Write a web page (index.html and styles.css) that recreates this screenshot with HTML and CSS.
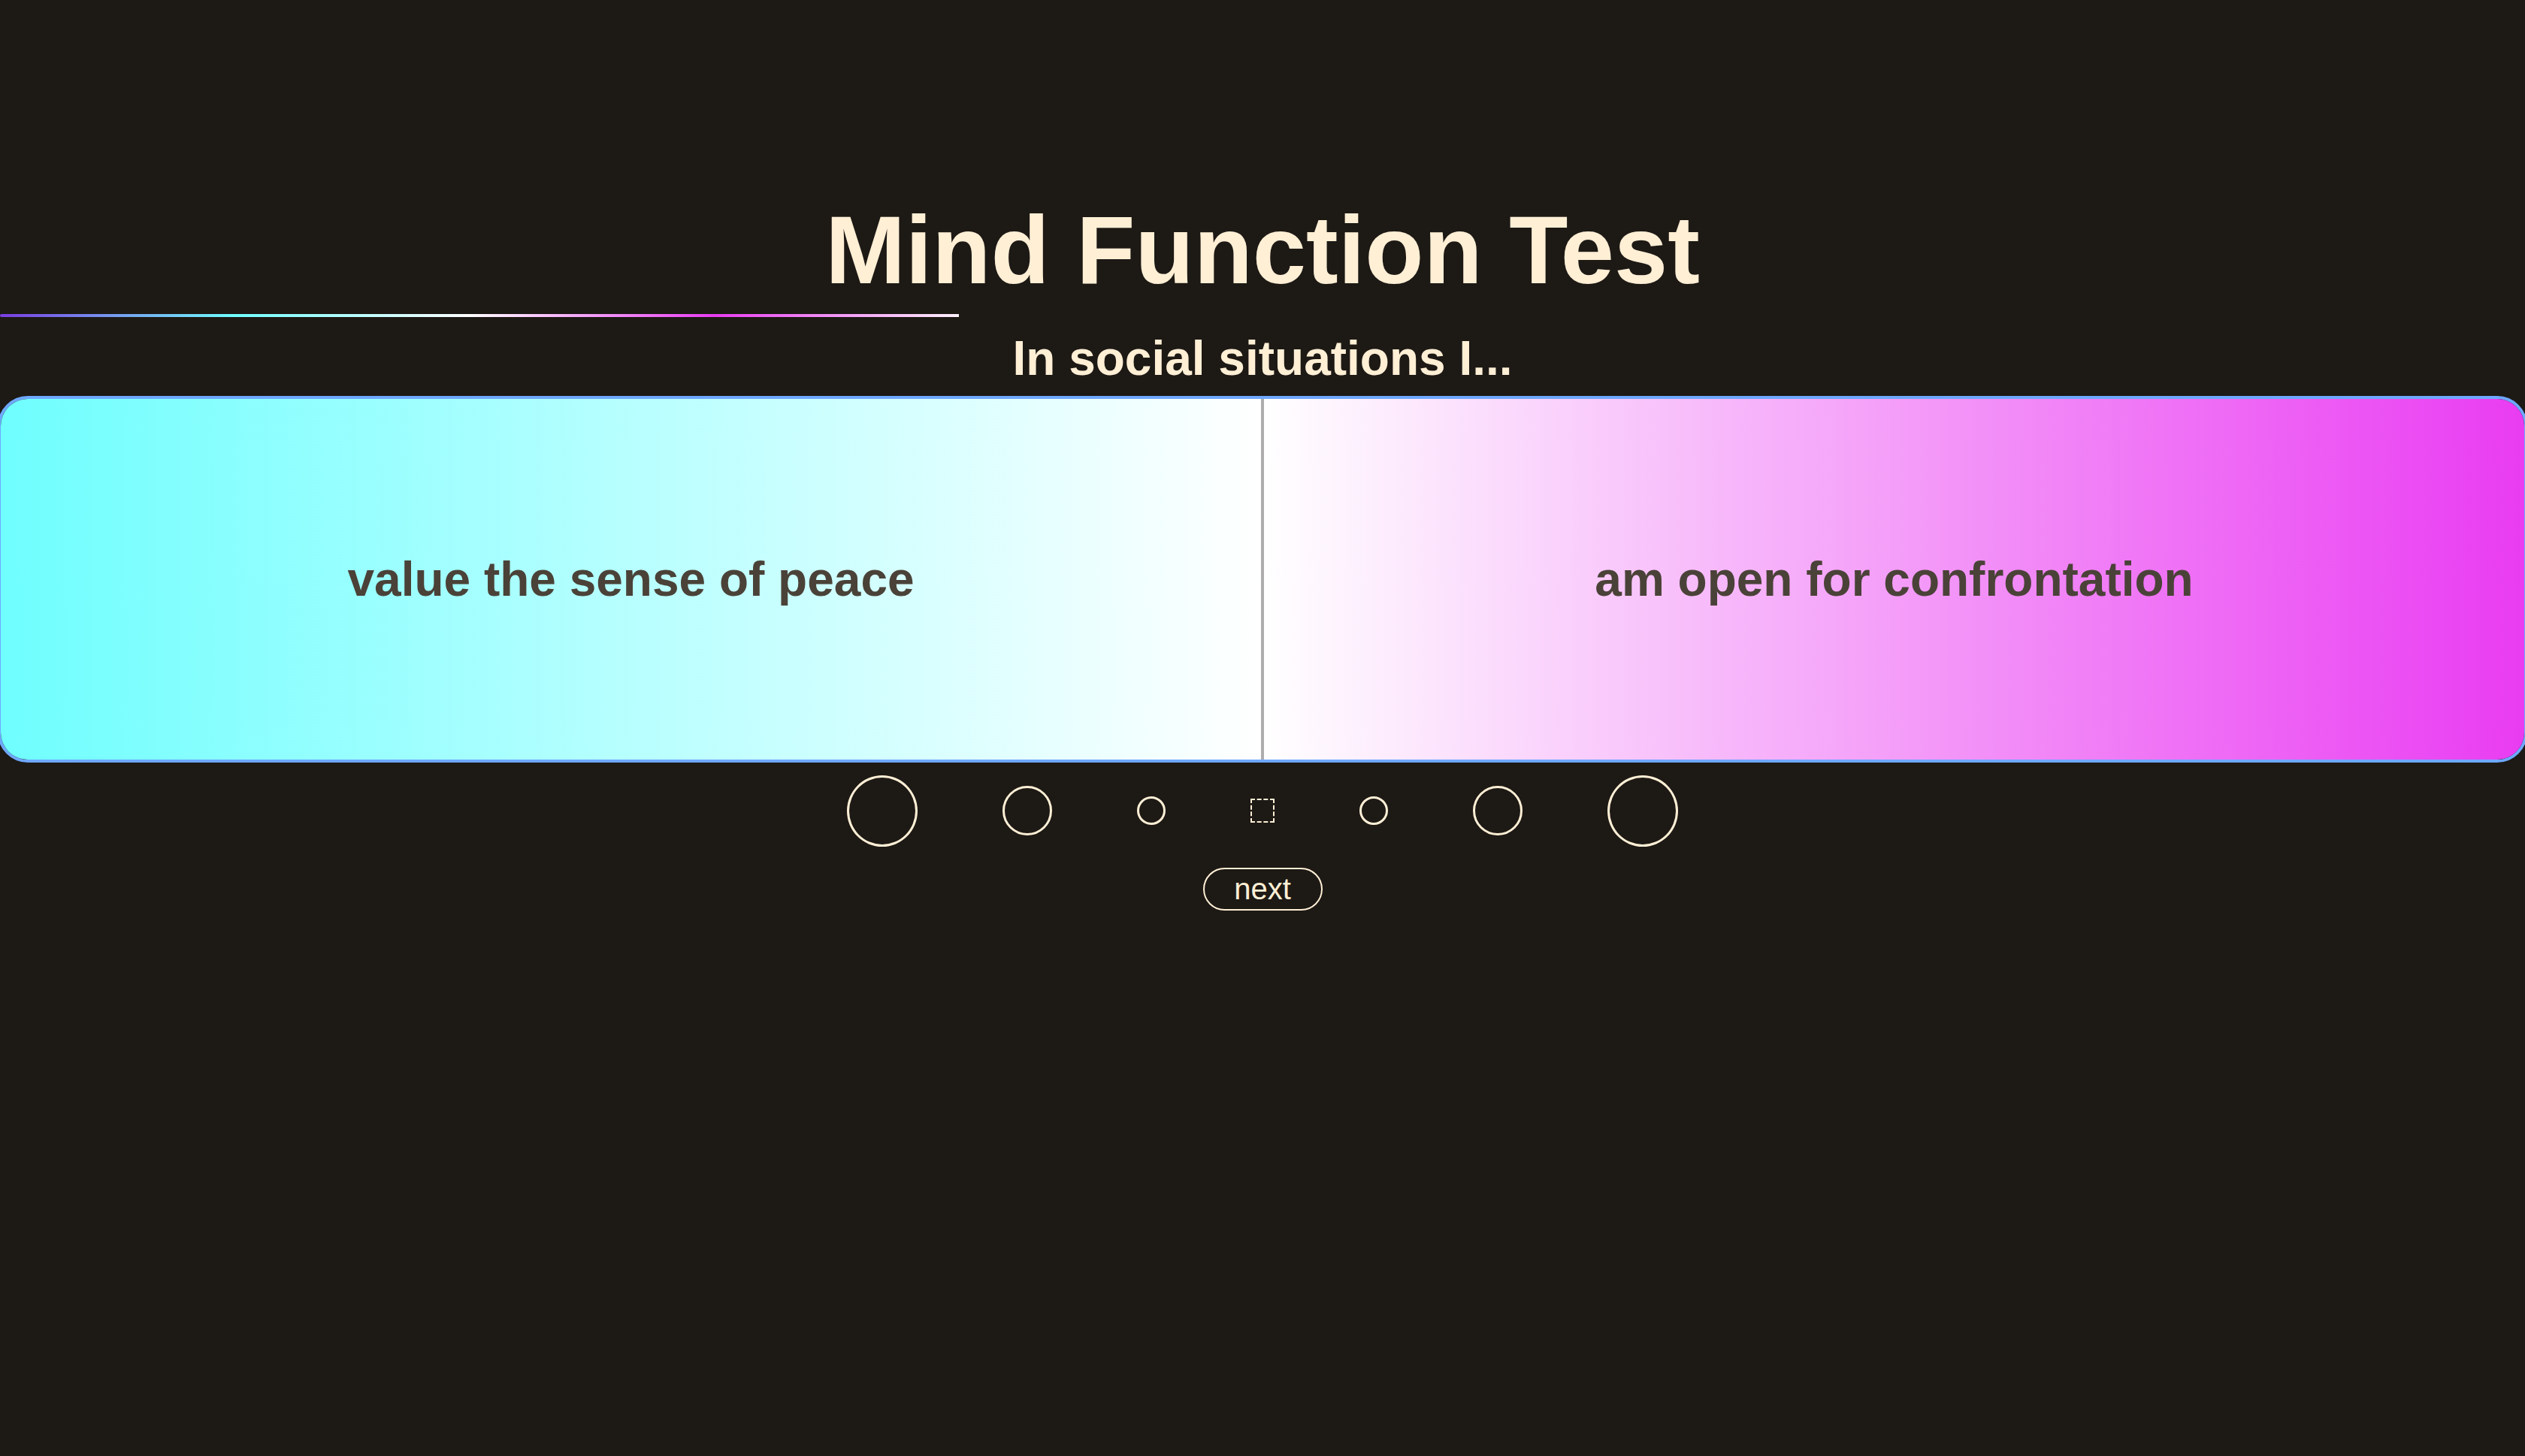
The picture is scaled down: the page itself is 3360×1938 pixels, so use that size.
FILE: index.html
```html
<!DOCTYPE html>
<html lang="en">
<head>
<meta charset="utf-8">
<title>Mind Function Test</title>
<link rel="stylesheet" href="styles.css">
</head>
<body>
<main class="quiz">
  <h1 class="title">Mind Function Test</h1>
  <div class="progress"><div class="progress-fill" style="width: 37.98%"></div></div>
  <h2 class="question">In social situations I...</h2>
  <div class="card">
    <div class="option option-left"><span class="option-text">value the sense of peace</span></div>
    <div class="divider"></div>
    <div class="option option-right"><span class="option-text">am open for confrontation</span></div>
  </div>
  <div class="scale">
    <span class="dot dot-lg"></span>
    <span class="dot dot-md"></span>
    <span class="dot dot-sm"></span>
    <span class="dot-neutral"></span>
    <span class="dot dot-sm"></span>
    <span class="dot dot-md"></span>
    <span class="dot dot-lg"></span>
  </div>
  <div class="actions">
    <button class="next" type="button">next</button>
  </div>
</main>
</body>
</html>
```

FILE: styles.css
```css
html, body {
  margin: 0;
  padding: 0;
}

html {
  background: #1d1915;
}

body {
  background: #1d1915;
  color: #ffefd5;
  font-family: "Liberation Sans", Arial, sans-serif;
  overflow-x: hidden;
}

.quiz {
  display: flex;
  flex-direction: column;
  align-items: stretch;
}

.title {
  margin: 0;
  padding-top: 269px;
  font-size: 128px;
  line-height: 128px;
  font-weight: 700;
  text-align: center;
  color: #ffefd5;
}

.progress {
  margin-top: 21px;
  height: 4px;
  width: 100%;
}

.progress-fill {
  height: 4px;
  border-radius: 2px 0 0 2px;
  background: linear-gradient(to right,
    #7a3de2 0%,
    #70ffff 24.5%,
    #ffffff 49%,
    #e93cf2 74.5%,
    #fdf2fc 100%);
}

.question {
  margin: 23px 0 0;
  font-size: 64px;
  line-height: 64px;
  font-weight: 700;
  text-align: center;
  color: #ffefd5;
}

.card {
  margin: 18px -3px 0;
  height: 488px;
  box-sizing: border-box;
  border: 4px solid #6ea8fe;
  border-radius: 40px;
  overflow: hidden;
  display: flex;
}

.option {
  flex: 1 1 0;
  display: flex;
  align-items: center;
  justify-content: center;
}

.option-left {
  background: linear-gradient(to right, #6ffefe 0%, #ffffff 100%);
}

.option-right {
  background: linear-gradient(to right, #ffffff 0%, #e93cf2 100%);
}

.divider {
  width: 4px;
  flex: 0 0 4px;
  background: #adadad;
}

.option-text {
  font-size: 64px;
  line-height: 64px;
  font-weight: 700;
  color: #4a4238;
}

.scale {
  margin-top: 16px;
  height: 96px;
  display: flex;
  justify-content: center;
  align-items: center;
  gap: 113px;
}

.dot {
  box-sizing: border-box;
  border: 3px solid #ffefd5;
  border-radius: 50%;
  flex: 0 0 auto;
}

.dot-lg {
  width: 94px;
  height: 95px;
}

.dot-md {
  width: 66px;
  height: 66px;
}

.dot-sm {
  width: 38px;
  height: 38px;
}

.dot-neutral {
  box-sizing: border-box;
  width: 32px;
  height: 32px;
  border: 2px dashed #ffefd5;
  flex: 0 0 auto;
}

.actions {
  margin-top: 28px;
  display: flex;
  justify-content: center;
}

.next {
  font-family: "Liberation Sans", Arial, sans-serif;
  font-size: 40px;
  line-height: 45px;
  padding: 4px 38px;
  width: 159px;
  height: 57px;
  box-sizing: border-box;
  background: transparent;
  color: #ffefd5;
  border: 2px solid #ffefd5;
  border-radius: 30px;
  cursor: pointer;
}
```
